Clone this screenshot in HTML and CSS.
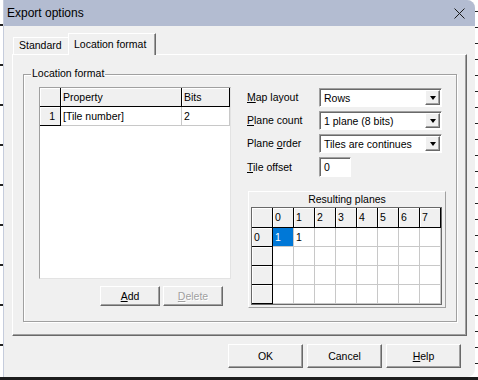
FILE: index.html
```html
<!DOCTYPE html>
<html>
<head>
<meta charset="utf-8">
<link rel="stylesheet" href="styles.css">
</head>
<body>
<div class="screen">
  <div class="row">
    <div class="edge edge-left"></div>
    <div class="dialog">
      <div class="titlebar">
        <span class="title">Export options</span>
        <svg class="close" width="11" height="11" viewBox="0 0 11 11"><path d="M0.5 0.5 L10.5 10.5 M10.5 0.5 L0.5 10.5" stroke="#1a1a1a" stroke-width="1" fill="none"/></svg>
      </div>
      <div class="content">
        <div class="tabs">
          <div class="tab tab-std">Standard</div>
          <div class="tab tab-active">Location format</div>
        </div>
        <div class="page">
          <div class="group">
            <div class="legend">Location format</div>
            <div class="left">
              <div class="sunken props">
                <div class="cell fixed"></div>
                <div class="cell fixed">Property</div>
                <div class="cell fixed">Bits</div>
                <div class="cell fixed num">1</div>
                <div class="cell">[Tile number]</div>
                <div class="cell">2</div>
              </div>
              <div class="btnrow">
                <button class="btn small"><span><u>A</u>dd</span></button>
                <button class="btn small disabled"><span><u>D</u>elete</span></button>
              </div>
            </div>
            <div class="right">
              <div class="form">
                <label class="lbl"><u>M</u>ap layout</label>
                <div class="combo"><span class="val">Rows</span><span class="drop"><i class="tri"></i></span></div>
                <label class="lbl"><u>P</u>lane count</label>
                <div class="combo"><span class="val">1 plane (8 bits)</span><span class="drop"><i class="tri"></i></span></div>
                <label class="lbl">Plane <u>o</u>rder</label>
                <div class="combo"><span class="val">Tiles are continues</span><span class="drop"><i class="tri"></i></span></div>
                <label class="lbl"><u>T</u>ile offset</label>
                <div class="edit"><span class="val">0</span></div>
              </div>
              <div class="planes">
                <div class="planes-title">Resulting planes</div>
                <div class="pgrid">
                  <div class="pc pf"></div>
                  <div class="pc pf">0</div><div class="pc pf">1</div><div class="pc pf">2</div><div class="pc pf">3</div>
                  <div class="pc pf">4</div><div class="pc pf">5</div><div class="pc pf">6</div><div class="pc pf">7</div>
                  <div class="pc pf">0</div>
                  <div class="pc sel">1</div><div class="pc">1</div><div class="pc"></div><div class="pc"></div>
                  <div class="pc"></div><div class="pc"></div><div class="pc"></div><div class="pc"></div>
                  <div class="pc pf"></div>
                  <div class="pc"></div><div class="pc"></div><div class="pc"></div><div class="pc"></div>
                  <div class="pc"></div><div class="pc"></div><div class="pc"></div><div class="pc"></div>
                  <div class="pc pf"></div>
                  <div class="pc"></div><div class="pc"></div><div class="pc"></div><div class="pc"></div>
                  <div class="pc"></div><div class="pc"></div><div class="pc"></div><div class="pc"></div>
                  <div class="pc pf"></div>
                  <div class="pc"></div><div class="pc"></div><div class="pc"></div><div class="pc"></div>
                  <div class="pc"></div><div class="pc"></div><div class="pc"></div><div class="pc"></div>
                </div>
              </div>
            </div>
          </div>
        </div>
        <div class="footer">
          <button class="btn big"><span>OK</span></button>
          <button class="btn big"><span>Cancel</span></button>
          <button class="btn big"><span><u>H</u>elp</span></button>
        </div>
      </div>
    </div>
    <div class="edge edge-right"></div>
  </div>
  <div class="bottom"></div>
</div>
</body>
</html>
```

FILE: styles.css
```css
* { box-sizing: border-box; }
html, body { margin: 0; padding: 0; }
body {
  width: 478px; height: 380px; overflow: hidden; background: #fff;
  font-family: "Liberation Sans", Arial, sans-serif; font-size: 10.5px; color: #000;
}
.screen { display: flex; flex-direction: column; width: 478px; height: 380px; }
.row { display: flex; height: 377px; }
.edge { width: 3px; flex: none; }
.edge-left {
  background: repeating-linear-gradient(to bottom, #fff 0 24px, #222 24px 26px, #fff 26px 40px);
}
.edge-right {
  background: repeating-linear-gradient(to bottom, #fff 0 11px, #222 11px 12px, #fff 12px 16px);
}
.bottom { height: 3px; background: #1c1c1c; }

.dialog {
  width: 472px; flex: none; background: #f0f0f0;
  display: flex; flex-direction: column;
  border-left: 1px solid #c5ccdc;
  border-top-right-radius: 8px; border-bottom-right-radius: 8px;
  overflow: hidden;
}
.titlebar {
  height: 26px; flex: none; background: #b3bcd1;
  display: flex; align-items: center; justify-content: space-between;
  padding: 0 10px 0 3px;
}
.title { font-size: 12px; color: #000; }
.close { display: block; }

.content { padding: 7px 8px 0 8px; display: flex; flex-direction: column; }

.tabs { display: flex; align-items: flex-end; height: 21px; padding-left: 1px; position: relative; z-index: 1; }
.tab {
  background: #f0f0f0; border: 1px solid; border-bottom: none;
  border-color: #fff #696969 transparent #fff;
  box-shadow: inset -1px 0 0 #a0a0a0;
  padding-left: 5px; line-height: 15px;
}
.tab-std { width: 55px; height: 17px; border-right: none; box-shadow: none; }
.tab-active { width: 88px; height: 22px; margin-bottom: -1px; padding-top: 3px; }

.page {
  width: 455px; height: 282px;
  border: 1px solid; border-color: #fff #696969 #696969 #fff;
  box-shadow: inset -1px -1px 0 #a0a0a0;
  padding: 19px 0 0 10px;
}
.group {
  position: relative; width: 434px; height: 248px;
  border: 1px solid #a0a0a0;
  box-shadow: inset 1px 1px 0 #fff, 1px 1px 0 #fff;
  display: flex; gap: 16px; padding: 12px 0 0 15px;
}
.legend { position: absolute; top: -8px; left: 7px; padding: 0 1px; background: #f0f0f0; line-height: 13px; }

.left { width: 192px; display: flex; flex-direction: column; }
.sunken {
  border: 1px solid; border-color: #a0a0a0 #e3e3e3 #e3e3e3 #a0a0a0;
  background: #fff;
}
.props {
  width: 192px; height: 192px;
  display: grid; grid-template-columns: 21px 121px 48px; grid-auto-rows: 19px; align-content: start;
}
.cell {
  border-right: 1px solid #c8c8c8; border-bottom: 1px solid #c8c8c8;
  padding: 0 2px; line-height: 18px; white-space: nowrap; overflow: hidden;
}
.fixed { background: #f0f0f0; border-color: #000; box-shadow: inset 1px 1px 0 #fff; }
.num { text-align: right; padding-right: 5px; }

.btnrow { display: flex; justify-content: flex-end; gap: 3px; padding-right: 8px; margin-top: 7px; }
.btn {
  font: inherit; color: #000; background: #f0f0f0; padding: 0;
  border: 1px solid; border-color: #fff #696969 #696969 #fff;
  box-shadow: inset -1px -1px 0 #a0a0a0;
  display: flex; align-items: center; justify-content: center;
}
.small { width: 60px; height: 20px; }
.big { width: 75px; height: 24px; }
.disabled { color: #a0a0a0; text-shadow: 1px 1px 0 #fff; }

.right { width: 199px; display: flex; flex-direction: column; padding-top: 1px; }
.form { display: grid; grid-template-columns: 72px 123px; row-gap: 4px; align-items: center; }
.lbl { line-height: 19px; }
.combo, .edit {
  height: 19px; background: #fff;
  border: 1px solid; border-color: #a0a0a0 #fff #fff #a0a0a0;
  box-shadow: inset 1px 1px 0 #696969;
  display: flex; align-items: stretch; padding: 1px 1px 0 1px;
}
.edit { width: 32px; height: 20px; }
.val { flex: 1; padding-left: 3px; line-height: 16px; white-space: nowrap; }
.drop {
  width: 15px; background: #f0f0f0; margin-bottom: 1px;
  border: 1px solid; border-color: #fff #696969 #696969 #fff;
  box-shadow: inset -1px -1px 0 #a0a0a0;
  display: flex; align-items: center; justify-content: center;
}
.tri { width: 0; height: 0; border-left: 3.5px solid transparent; border-right: 3.5px solid transparent; border-top: 4px solid #000; }

.planes {
  margin: 14px 0 0 1px; width: 198px; height: 117px;
  border: 1px solid; border-color: #fff #a0a0a0 #a0a0a0 #fff;
  padding: 0 0 0 2px;
}
.planes-title { text-align: center; height: 15px; line-height: 15px; padding-right: 2px; }
.pgrid {
  width: 191px; border: 1px solid #696969; background: #fff;
  display: grid; grid-template-columns: repeat(9, 21px); grid-template-rows: 20px repeat(4, 19px);
}
.pc { border-right: 1px solid #c8c8c8; border-bottom: 1px solid #c8c8c8; padding-left: 2px; line-height: 18px; }
.pf { background: #f0f0f0; border-color: #000; box-shadow: inset 1px 1px 0 #fff; }
.sel { background: #0078d7; color: #fff; }

.footer { display: flex; justify-content: flex-end; gap: 4px; padding-right: 6px; margin-top: 8px; }
```
